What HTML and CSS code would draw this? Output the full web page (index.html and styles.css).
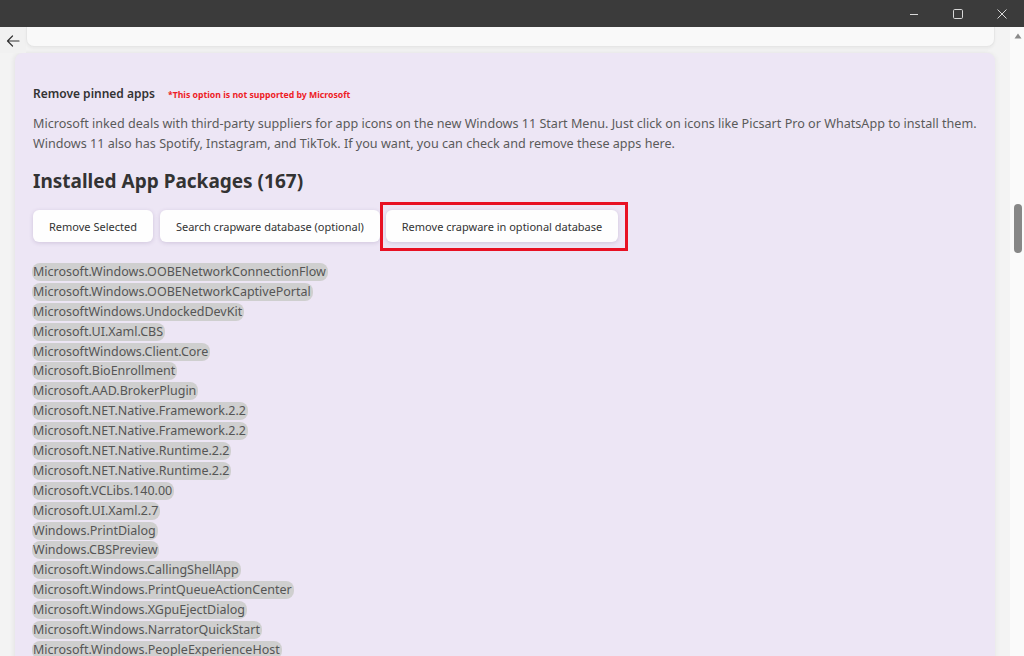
FILE: index.html
```html
<!DOCTYPE html>
<html>
<head>
<meta charset="utf-8">
<link rel="stylesheet" href="styles.css">
</head>
<body>
<div class="titlebar">
  <div class="ctl"><svg width="10" height="10" viewBox="0 0 10 10"><path d="M1 5.5h8" stroke="#d8d8d8" stroke-width="1"/></svg></div>
  <div class="ctl"><svg width="10" height="10" viewBox="0 0 10 10"><rect x="0.5" y="0.5" width="9" height="9" rx="1.2" fill="none" stroke="#d8d8d8" stroke-width="1"/></svg></div>
  <div class="ctl"><svg width="10" height="10" viewBox="0 0 10 10"><path d="M0.5 0.5l9 9M9.5 0.5l-9 9" stroke="#d8d8d8" stroke-width="1"/></svg></div>
</div>
<div class="window">
  <div class="content">
    <div class="toprow">
      <div class="back"><svg width="14" height="12" viewBox="0 0 14 12"><path d="M13 6H1.5M6.5 1L1.5 6l5 5" fill="none" stroke="#333" stroke-width="1.2" stroke-linecap="round" stroke-linejoin="round"/></svg></div>
      <div class="topcard"></div>
    </div>
    <div class="card">
      <div class="opt">
        <span class="opt-title">Remove pinned apps</span>
        <span class="opt-warn">*This option is not supported by Microsoft</span>
      </div>
      <p class="desc">Microsoft inked deals with third-party suppliers for app icons on the new Windows 11 Start Menu. Just click on icons like Picsart Pro or WhatsApp to install them. Windows 11 also has Spotify, Instagram, and TikTok. If you want, you can check and remove these apps here.</p>
      <h2 class="heading">Installed App Packages (167)</h2>
      <div class="buttons">
        <button class="btn">Remove Selected</button>
        <button class="btn">Search crapware database (optional)</button>
        <div class="highlight"><button class="btn">Remove crapware in optional database</button></div>
      </div>
      <ul class="list">
        <li><span>Microsoft.Windows.OOBENetworkConnectionFlow</span></li>
        <li><span>Microsoft.Windows.OOBENetworkCaptivePortal</span></li>
        <li><span>MicrosoftWindows.UndockedDevKit</span></li>
        <li><span>Microsoft.UI.Xaml.CBS</span></li>
        <li><span>MicrosoftWindows.Client.Core</span></li>
        <li><span>Microsoft.BioEnrollment</span></li>
        <li><span>Microsoft.AAD.BrokerPlugin</span></li>
        <li><span>Microsoft.NET.Native.Framework.2.2</span></li>
        <li><span>Microsoft.NET.Native.Framework.2.2</span></li>
        <li><span>Microsoft.NET.Native.Runtime.2.2</span></li>
        <li><span>Microsoft.NET.Native.Runtime.2.2</span></li>
        <li><span>Microsoft.VCLibs.140.00</span></li>
        <li><span>Microsoft.UI.Xaml.2.7</span></li>
        <li><span>Windows.PrintDialog</span></li>
        <li><span>Windows.CBSPreview</span></li>
        <li><span>Microsoft.Windows.CallingShellApp</span></li>
        <li><span>Microsoft.Windows.PrintQueueActionCenter</span></li>
        <li><span>Microsoft.Windows.XGpuEjectDialog</span></li>
        <li><span>Microsoft.Windows.NarratorQuickStart</span></li>
        <li><span>Microsoft.Windows.PeopleExperienceHost</span></li>
      </ul>
    </div>
  </div>
  <div class="scrollbar">
    <svg class="up" width="8" height="6" viewBox="0 0 8 6"><path d="M4 0.5L7.5 5.5H0.5z" fill="#8a8a8a"/></svg>
    <div class="thumb"></div>
  </div>
</div>
</body>
</html>
```
FILE: styles.css
```css
html, body {
  margin: 0;
  padding: 0;
}
body {
  width: 1024px;
  height: 656px;
  overflow: hidden;
  font-family: "Noto Sans", "Open Sans", sans-serif;
  background: #f3f3f3;
}
.titlebar {
  height: 27px;
  background: #3b3b3b;
  display: flex;
  justify-content: flex-end;
  align-items: center;
  padding-right: 0;
}
.ctl {
  width: 44px;
  height: 27px;
  display: flex;
  align-items: center;
  justify-content: center;
}
.window {
  display: flex;
  height: 629px;
}
.content {
  flex: 1;
  background: #f3f3f3;
  overflow: hidden;
}
.toprow {
  display: flex;
  height: 20px;
}
.back {
  width: 26px;
  height: 26px;
  display: flex;
  align-items: center;
  justify-content: center;
  box-sizing: border-box;
  padding-top: 1px;
  background: #f1f1f1;
}
.topcard {
  flex: 1;
  margin-right: 15px;
  background: #f9f9f9;
  border: 1px solid #e6e6e6;
  border-top: none;
  border-radius: 0 0 8px 8px;
  box-shadow: 0 2px 3px rgba(0,0,0,0.04);
}
.card {
  margin: 6px 15px 0 15px;
  background: #ede6f5;
  border-radius: 8px 8px 0 0;
  padding: 32px 10px 0 18px;
  height: 640px;
  box-shadow: -2px 0 4px rgba(0,0,0,0.05), 2px 0 4px rgba(0,0,0,0.03);
}
.opt {
  display: flex;
  align-items: baseline;
  gap: 13px;
  height: 16px;
}
.opt-title {
  font-size: 12px;
  font-weight: 600;
  color: #333;
}
.opt-warn {
  font-size: 8.7px;
  font-weight: 700;
  color: #ee1c25;
}
.desc {
  margin: 13px 0 0 0;
  font-size: 12.6px;
  line-height: 19.5px;
  color: #5a5a5a;
}
.heading {
  margin: 15px 0 0 0;
  font-size: 19px;
  font-weight: 700;
  color: #333;
  line-height: 26px;
}
.buttons {
  display: flex;
  align-items: flex-start;
  gap: 7px;
  margin-top: 16px;
  height: 32px;
}
.btn {
  height: 32px;
  background: #fefefe;
  border: none;
  border-radius: 6px;
  box-shadow: 0 1px 4px rgba(80,50,110,0.18);
  font-family: "Noto Sans", "Open Sans", sans-serif;
  font-size: 11px;
  color: #333;
  padding: 0 16px;
}
.highlight {
  margin-left: -7px;
  margin-top: -8px;
  border: 3px solid #e81123;
  padding: 5px 7px 6px 3px;
  display: flex;
}
.list {
  list-style: none;
  margin: 20px 0 0 -1px;
  padding: 0;
}
.list li {
  height: 19.9px;
  display: flex;
  align-items: center;
}
.list span {
  background: #cfcfcf;
  border-radius: 8px;
  font-size: 12.5px;
  line-height: 18px;
  color: #555;
  padding: 0 2px 0 1px;
}
.scrollbar {
  width: 14px;
  background: #fafafa;
  position: relative;
}
.up {
  position: absolute;
  left: 4px;
  top: 6px;
}
.thumb {
  position: absolute;
  left: 4px;
  top: 177px;
  width: 8px;
  height: 49px;
  border-radius: 4px;
  background: #878787;
}
```
